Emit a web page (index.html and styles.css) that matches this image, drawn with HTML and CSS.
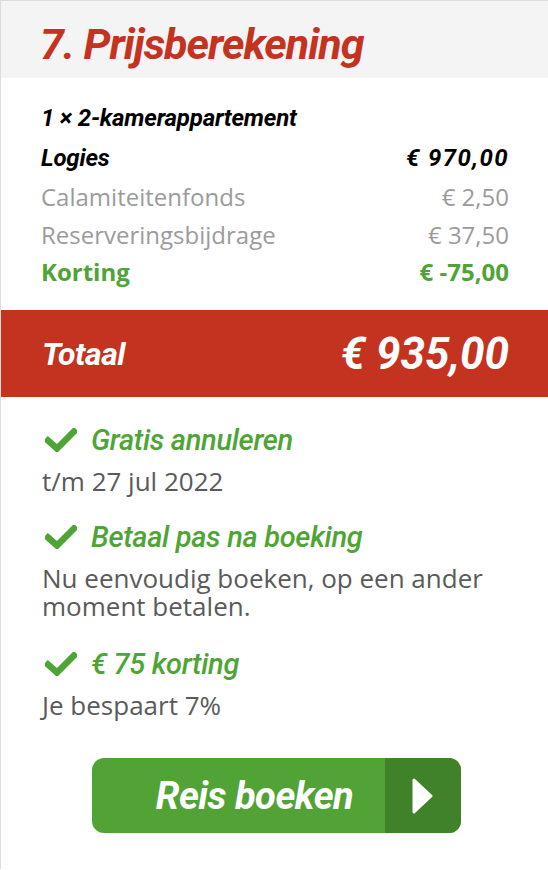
FILE: index.html
```html
<!DOCTYPE html>
<html lang="nl">
<head>
<meta charset="utf-8">
<title>Prijsberekening</title>
<link rel="stylesheet" href="styles.css">
</head>
<body>
<div class="card">
  <div class="card-header">
    <h2 class="card-title">7. Prijsberekening</h2>
  </div>
  <div class="lines">
    <div class="line line-room">1 × 2-kamerappartement</div>
    <div class="line line-main"><span>Logies</span><span class="amount">€ 970,00</span></div>
    <div class="line line-muted"><span>Calamiteitenfonds</span><span>€ 2,50</span></div>
    <div class="line line-muted"><span>Reserveringsbijdrage</span><span>€ 37,50</span></div>
    <div class="line line-discount"><span>Korting</span><span>€ -75,00</span></div>
  </div>
  <div class="total">
    <span class="total-label">Totaal</span>
    <span class="total-amount">€ 935,00</span>
  </div>
  <ul class="usps">
    <li class="usp">
      <div class="usp-title">
        <svg class="check" viewBox="0 0 32 24"><path d="M3 12.5 L12 20.5 L29 3.5" fill="none" stroke="#4ea434" stroke-width="6.5" stroke-linecap="square" stroke-linejoin="miter"/></svg>
        <span>Gratis annuleren</span>
      </div>
      <p class="usp-text">t/m 27 jul 2022</p>
    </li>
    <li class="usp">
      <div class="usp-title">
        <svg class="check" viewBox="0 0 32 24"><path d="M3 12.5 L12 20.5 L29 3.5" fill="none" stroke="#4ea434" stroke-width="6.5" stroke-linecap="square" stroke-linejoin="miter"/></svg>
        <span>Betaal pas na boeking</span>
      </div>
      <p class="usp-text">Nu eenvoudig boeken, op een ander moment betalen.</p>
    </li>
    <li class="usp">
      <div class="usp-title">
        <svg class="check" viewBox="0 0 32 24"><path d="M3 12.5 L12 20.5 L29 3.5" fill="none" stroke="#4ea434" stroke-width="6.5" stroke-linecap="square" stroke-linejoin="miter"/></svg>
        <span>€ 75 korting</span>
      </div>
      <p class="usp-text">Je bespaart 7%</p>
    </li>
  </ul>
  <div class="actions">
    <button class="book-btn" type="button">
      <span class="book-label">Reis boeken</span>
      <span class="book-arrow">
        <svg viewBox="0 0 22 36" width="22" height="36"><path d="M3 2 L20 18 L3 34 Z" fill="#fff" stroke="#fff" stroke-width="3" stroke-linejoin="round"/></svg>
      </span>
    </button>
  </div>
</div>
</body>
</html>
```
FILE: styles.css
```css
html, body {
  margin: 0;
  padding: 0;
  background: #fff;
}
.card {
  border-left: 1px solid #dcdcdc;
  border-top: 1px solid #dcdcdc;
  min-height: 869px;
  box-sizing: border-box;
  font-family: "Open Sans", sans-serif;
}
.card-header {
  background: #f4f4f4;
  height: 77px;
  box-sizing: border-box;
  padding: 22px 0 0 39px;
}
.card-title {
  margin: 0;
  font-family: Roboto, sans-serif;
  font-weight: 700;
  font-style: italic;
  font-size: 43px;
  letter-spacing: -1px;
  color: #c4331f;
  line-height: 43px;
}
.lines {
  padding: 20px 39px 21px 40px;
}
.line {
  display: flex;
  justify-content: space-between;
  align-items: center;
  height: 38px;
  font-size: 24px;
}
.line-room, .line-main {
  font-family: Roboto, sans-serif;
  font-weight: 700;
  font-style: italic;
  color: #000;
  letter-spacing: -0.2px;
}
.line-room { height: 40px; }
.line-main { height: 39px; }
.amount {
  letter-spacing: 1.4px;
}
.line-muted {
  color: #9b9b9b;
}
.line-discount {
  color: #4ea434;
  font-weight: 700;
  height: 36px;
}
.total {
  background: #c4331f;
  height: 87px;
  display: flex;
  justify-content: space-between;
  align-items: center;
  padding: 0 39px 0 41px;
  color: #fff;
  font-family: Roboto, sans-serif;
  font-weight: 700;
  font-style: italic;
}
.total-label {
  font-size: 32px;
  letter-spacing: -0.5px;
}
.total-amount {
  font-size: 44px;
  letter-spacing: 0;
}
.usps {
  list-style: none;
  margin: 0;
  padding: 26px 20px 0 41px;
}
.usp {
  margin-bottom: 25px;
}
.usp + .usp + .usp {
  margin-top: 27px;
}
.usp-title {
  display: flex;
  align-items: center;
  gap: 14px;
  height: 34px;
  font-family: Roboto, sans-serif;
  font-weight: 500;
  font-style: italic;
  font-size: 29px;
  color: #4ea434;
  letter-spacing: -0.3px;
}
.check {
  width: 32px;
  height: 24px;
  margin-left: 3px;
  flex: none;
}
.usp-text {
  margin: 0;
  font-size: 26px;
  line-height: 28px;
  color: #5a5a5a;
  padding-top: 10px;
}
.actions {
  display: flex;
  padding: 14px 0 0 91px;
}
.book-btn {
  display: flex;
  width: 369px;
  height: 75px;
  border: 0;
  padding: 0;
  border-radius: 12px;
  overflow: hidden;
  background: #52a336;
  cursor: pointer;
}
.book-label {
  flex: 1;
  display: flex;
  align-items: center;
  justify-content: center;
  color: #fff;
  font-family: Roboto, sans-serif;
  font-weight: 700;
  font-style: italic;
  font-size: 38px;
  letter-spacing: -0.5px;
  padding-left: 32px;
}
.book-arrow {
  width: 76px;
  background: #40822a;
  display: flex;
  align-items: center;
  justify-content: center;
  padding-right: 2px;
  box-sizing: border-box;
}
```
